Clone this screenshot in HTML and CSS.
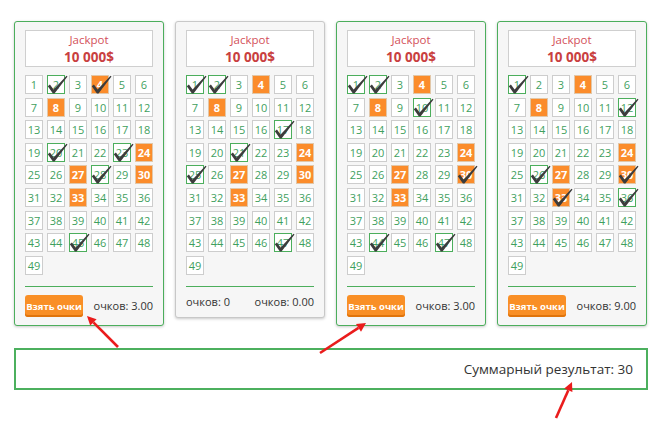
FILE: index.html
```html
<!DOCTYPE html>
<html lang="ru">
<head>
<meta charset="utf-8">
<title>Jackpot</title>
<link rel="stylesheet" href="styles.css">
</head>
<body>
<svg class="defs" width="0" height="0">
  <symbol id="tick" viewBox="0 0 22 20">
    <path d="M0.8 11.2 L2.9 9.6 L6.6 14.4 L19.5 0.7 L20.5 1.5 L7.5 18.6 L5.9 18.6 Z"/>
  </symbol>
</svg>
<div class="board">
  <div class="card active">
    <div class="jackpot"><span class="jp-title">Jackpot</span><span class="jp-sum">10 000$</span></div>
    <div class="grid">
      <div class="cell">1</div><div class="cell chk">2<svg class="tick"><use href="#tick"/></svg></div><div class="cell">3</div><div class="cell hit chk">4<svg class="tick"><use href="#tick"/></svg></div><div class="cell">5</div><div class="cell">6</div>
      <div class="cell">7</div><div class="cell hit">8</div><div class="cell">9</div><div class="cell">10</div><div class="cell">11</div><div class="cell">12</div>
      <div class="cell">13</div><div class="cell">14</div><div class="cell">15</div><div class="cell">16</div><div class="cell">17</div><div class="cell">18</div>
      <div class="cell">19</div><div class="cell chk">20<svg class="tick"><use href="#tick"/></svg></div><div class="cell">21</div><div class="cell">22</div><div class="cell chk">23<svg class="tick"><use href="#tick"/></svg></div><div class="cell hit">24</div>
      <div class="cell">25</div><div class="cell">26</div><div class="cell hit">27</div><div class="cell chk">28<svg class="tick"><use href="#tick"/></svg></div><div class="cell">29</div><div class="cell hit">30</div>
      <div class="cell">31</div><div class="cell">32</div><div class="cell hit">33</div><div class="cell">34</div><div class="cell">35</div><div class="cell">36</div>
      <div class="cell">37</div><div class="cell">38</div><div class="cell">39</div><div class="cell">40</div><div class="cell">41</div><div class="cell">42</div>
      <div class="cell">43</div><div class="cell">44</div><div class="cell chk">45<svg class="tick"><use href="#tick"/></svg></div><div class="cell">46</div><div class="cell">47</div><div class="cell">48</div>
      <div class="cell">49</div>
    </div>
    <div class="footer"><button class="take">Взять очки</button><span class="score">очков: 3.00</span></div>
  </div>

  <div class="card">
    <div class="jackpot"><span class="jp-title">Jackpot</span><span class="jp-sum">10 000$</span></div>
    <div class="grid">
      <div class="cell chk">1<svg class="tick"><use href="#tick"/></svg></div><div class="cell chk">2<svg class="tick"><use href="#tick"/></svg></div><div class="cell">3</div><div class="cell hit">4</div><div class="cell">5</div><div class="cell">6</div>
      <div class="cell">7</div><div class="cell hit">8</div><div class="cell">9</div><div class="cell">10</div><div class="cell">11</div><div class="cell">12</div>
      <div class="cell">13</div><div class="cell">14</div><div class="cell">15</div><div class="cell">16</div><div class="cell chk">17<svg class="tick"><use href="#tick"/></svg></div><div class="cell">18</div>
      <div class="cell">19</div><div class="cell">20</div><div class="cell chk">21<svg class="tick"><use href="#tick"/></svg></div><div class="cell">22</div><div class="cell">23</div><div class="cell hit">24</div>
      <div class="cell chk">25<svg class="tick"><use href="#tick"/></svg></div><div class="cell">26</div><div class="cell hit">27</div><div class="cell">28</div><div class="cell">29</div><div class="cell hit">30</div>
      <div class="cell">31</div><div class="cell">32</div><div class="cell hit">33</div><div class="cell">34</div><div class="cell">35</div><div class="cell">36</div>
      <div class="cell">37</div><div class="cell">38</div><div class="cell">39</div><div class="cell">40</div><div class="cell">41</div><div class="cell">42</div>
      <div class="cell">43</div><div class="cell">44</div><div class="cell">45</div><div class="cell">46</div><div class="cell chk">47<svg class="tick"><use href="#tick"/></svg></div><div class="cell">48</div>
      <div class="cell">49</div>
    </div>
    <div class="footer plain"><span class="score">очков: 0</span><span class="score">очков: 0.00</span></div>
  </div>

  <div class="card active">
    <div class="jackpot"><span class="jp-title">Jackpot</span><span class="jp-sum">10 000$</span></div>
    <div class="grid">
      <div class="cell chk">1<svg class="tick"><use href="#tick"/></svg></div><div class="cell chk">2<svg class="tick"><use href="#tick"/></svg></div><div class="cell">3</div><div class="cell hit">4</div><div class="cell">5</div><div class="cell">6</div>
      <div class="cell">7</div><div class="cell hit">8</div><div class="cell">9</div><div class="cell chk">10<svg class="tick"><use href="#tick"/></svg></div><div class="cell">11</div><div class="cell">12</div>
      <div class="cell">13</div><div class="cell">14</div><div class="cell">15</div><div class="cell">16</div><div class="cell">17</div><div class="cell">18</div>
      <div class="cell">19</div><div class="cell">20</div><div class="cell">21</div><div class="cell">22</div><div class="cell">23</div><div class="cell hit">24</div>
      <div class="cell">25</div><div class="cell">26</div><div class="cell hit">27</div><div class="cell">28</div><div class="cell">29</div><div class="cell hit chk">30<svg class="tick"><use href="#tick"/></svg></div>
      <div class="cell">31</div><div class="cell">32</div><div class="cell hit">33</div><div class="cell">34</div><div class="cell">35</div><div class="cell">36</div>
      <div class="cell">37</div><div class="cell">38</div><div class="cell">39</div><div class="cell">40</div><div class="cell">41</div><div class="cell">42</div>
      <div class="cell">43</div><div class="cell chk">44<svg class="tick"><use href="#tick"/></svg></div><div class="cell">45</div><div class="cell">46</div><div class="cell chk">47<svg class="tick"><use href="#tick"/></svg></div><div class="cell">48</div>
      <div class="cell">49</div>
    </div>
    <div class="footer"><button class="take">Взять очки</button><span class="score">очков: 3.00</span></div>
  </div>

  <div class="card active">
    <div class="jackpot"><span class="jp-title">Jackpot</span><span class="jp-sum">10 000$</span></div>
    <div class="grid">
      <div class="cell chk">1<svg class="tick"><use href="#tick"/></svg></div><div class="cell">2</div><div class="cell">3</div><div class="cell hit">4</div><div class="cell">5</div><div class="cell">6</div>
      <div class="cell">7</div><div class="cell hit">8</div><div class="cell">9</div><div class="cell">10</div><div class="cell">11</div><div class="cell chk">12<svg class="tick"><use href="#tick"/></svg></div>
      <div class="cell">13</div><div class="cell">14</div><div class="cell">15</div><div class="cell">16</div><div class="cell">17</div><div class="cell">18</div>
      <div class="cell">19</div><div class="cell">20</div><div class="cell">21</div><div class="cell">22</div><div class="cell">23</div><div class="cell hit">24</div>
      <div class="cell">25</div><div class="cell chk">26<svg class="tick"><use href="#tick"/></svg></div><div class="cell hit">27</div><div class="cell">28</div><div class="cell">29</div><div class="cell hit chk">30<svg class="tick"><use href="#tick"/></svg></div>
      <div class="cell">31</div><div class="cell">32</div><div class="cell hit chk">33<svg class="tick"><use href="#tick"/></svg></div><div class="cell">34</div><div class="cell">35</div><div class="cell chk">36<svg class="tick"><use href="#tick"/></svg></div>
      <div class="cell">37</div><div class="cell">38</div><div class="cell">39</div><div class="cell">40</div><div class="cell">41</div><div class="cell">42</div>
      <div class="cell">43</div><div class="cell">44</div><div class="cell">45</div><div class="cell">46</div><div class="cell">47</div><div class="cell">48</div>
      <div class="cell">49</div>
    </div>
    <div class="footer"><button class="take">Взять очки</button><span class="score">очков: 9.00</span></div>
  </div>
</div>

<div class="summary">Суммарный результат: 30</div>

<svg class="arrows" width="662" height="422" viewBox="0 0 662 422">
  <line x1="118" y1="347" x2="93.4" y2="322.4"/>
  <polygon points="87,316 96.6,319.2 90.2,325.6"/>
  <line x1="320" y1="353" x2="358.5" y2="327.9"/>
  <polygon points="366,323 361,331.7 356,324.1"/>
  <line x1="556" y1="418" x2="568.3" y2="390.2"/>
  <polygon points="572,382 572.4,392 564.2,388.4"/>
</svg>
</body>
</html>
```
FILE: styles.css
```css
html, body {
  margin: 0;
  padding: 0;
  background: #ffffff;
}
body {
  position: relative;
  width: 662px;
  height: 422px;
  overflow: hidden;
  font-family: "Open Sans", "Noto Sans", "DejaVu Sans", sans-serif;
  color: #333;
}
.defs {
  position: absolute;
}
.board {
  display: flex;
  align-items: flex-start;
  gap: 11px;
  padding: 21px 0 0 14px;
}
.card {
  width: 150px;
  box-sizing: border-box;
  background: #f6f6f6;
  border: 1px solid #c8c8c8;
  border-radius: 3px;
  padding: 8px 10px 8px 10px;
  box-shadow: 0 1px 3px rgba(0, 0, 0, 0.22);
}
.card.active {
  border-color: #4cae5c;
}
.jackpot {
  height: 37px;
  box-sizing: border-box;
  background: #fff;
  border: 1px solid #cfcfcf;
  display: flex;
  flex-direction: column;
  align-items: center;
  justify-content: center;
  margin-bottom: 8px;
}
.jp-title {
  font-size: 11.5px;
  line-height: 16px;
  color: #d3505a;
}
.jp-sum {
  font-size: 13.5px;
  font-weight: 700;
  line-height: 18px;
  color: #c9403f;
}
.grid {
  display: grid;
  grid-template-columns: repeat(6, 18px);
  grid-auto-rows: 19px;
  column-gap: 4px;
  row-gap: 3.6px;
}
.cell {
  position: relative;
  box-sizing: border-box;
  background: #fff;
  border: 1px solid #cdcdcd;
  font-size: 11px;
  line-height: 17px;
  text-align: center;
  color: #3f9f5e;
}
.cell.chk {
  border-color: #4cae5c;
}
.cell.hit {
  background: #fb8c2b;
  border-color: #e2c7a8;
  color: #fff;
  font-weight: 700;
}
.tick {
  position: absolute;
  left: -1px;
  top: -1px;
  width: 22px;
  height: 20px;
  overflow: visible;
  fill: #3c3c3c;
}
.footer {
  margin-top: 11.5px;
  border-top: 1px solid #4cae5c;
  padding-top: 8px;
  display: flex;
  align-items: center;
  justify-content: space-between;
}
.take {
  height: 22px;
  width: 58px;
  padding: 0;
  border: none;
  border-radius: 3px;
  background: #f98f26;
  box-shadow: inset 0 -2px 0 #e0740c;
  color: #fff;
  font-family: inherit;
  font-size: 9.5px;
  font-weight: 700;
}
.score {
  font-size: 11px;
  line-height: 14px;
  color: #333;
}
.summary {
  margin: 22px 0 0 14px;
  width: 634px;
  height: 42px;
  box-sizing: border-box;
  border: 2px solid #4cb05e;
  display: flex;
  align-items: center;
  justify-content: flex-end;
  padding-right: 13px;
  font-size: 13.5px;
  color: #333;
}
.arrows {
  position: absolute;
  left: 0;
  top: 0;
  pointer-events: none;
}
.arrows line {
  stroke: #ea1c1c;
  stroke-width: 2.6;
}
.arrows polygon {
  fill: #ea1c1c;
}
```
